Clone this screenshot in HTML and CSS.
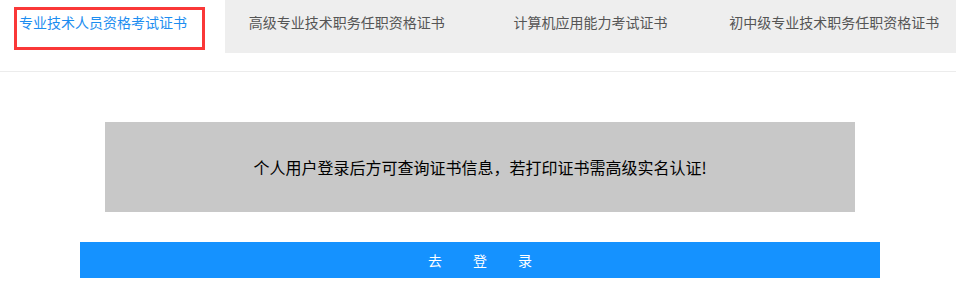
FILE: index.html
```html
<!DOCTYPE html>
<html>
    <head>
        <title>证书查询</title>
        <link rel="stylesheet" href="styles.css">
    </head>
    <body>
        <div class="tabs">
            <div class="tab-first">
                <a class="tab-active">专业技术人员资格考试证书</a>
            </div>
            <div class="tab-rest">
                <a class="tab">高级专业技术职务任职资格证书</a>
                <a class="tab">计算机应用能力考试证书</a>
                <a class="tab">初中级专业技术职务任职资格证书</a>
            </div>
        </div>
        <div class="content">
            <div class="notice">个人用户登录后方可查询证书信息，若打印证书需高级实名认证!</div>
            <button class="loginButton"><span>去</span><span>登</span><span>录</span></button>
        </div>
    </body>
</html>
```

FILE: styles.css
```css
/* Page base */
body {
    margin: 0;
    font-family: "Noto Sans CJK SC", "Microsoft YaHei", sans-serif;
    background-color: rgb(255, 255, 255);
}

/* Tab bar */
.tabs {
    display: flex;
    height: 53px;
    border-bottom: 1px solid rgb(236, 236, 236);
    padding-bottom: 18px;
}

.tab-first {
    width: 225px;
    padding: 7px 0 0 14px;
    box-sizing: border-box;
}

.tab-active {
    display: block;
    width: 191px;
    height: 43px;
    box-sizing: border-box;
    border: 3px solid rgb(250, 56, 56);
    padding: 1px 0 0 2px;
    font-size: 14px;
    line-height: 22px;
    color: rgb(28, 141, 240);
}

.tab-rest {
    flex: 1;
    display: flex;
    background-color: rgb(238, 238, 238);
}

.tab {
    flex: 1;
    text-align: center;
    font-size: 14px;
    line-height: 45px;
    color: rgb(85, 85, 85);
}

/* Content */
.content {
    width: 800px;
    margin: 50px 0 0 80px;
}

.notice {
    margin: 0 25px;
    height: 90px;
    background-color: rgb(200, 200, 200);
    color: rgb(0, 0, 0);
    font-size: 16px;
    line-height: 90px;
    text-align: center;
}

.loginButton {
    display: flex;
    justify-content: center;
    gap: 31px;
    width: 800px;
    height: 36px;
    margin-top: 30px;
    border: none;
    background-color: rgb(21, 146, 255);
    color: rgb(255, 255, 255);
    font-family: inherit;
    font-size: 14px;
    line-height: 36px;
    padding: 0;
}
```
